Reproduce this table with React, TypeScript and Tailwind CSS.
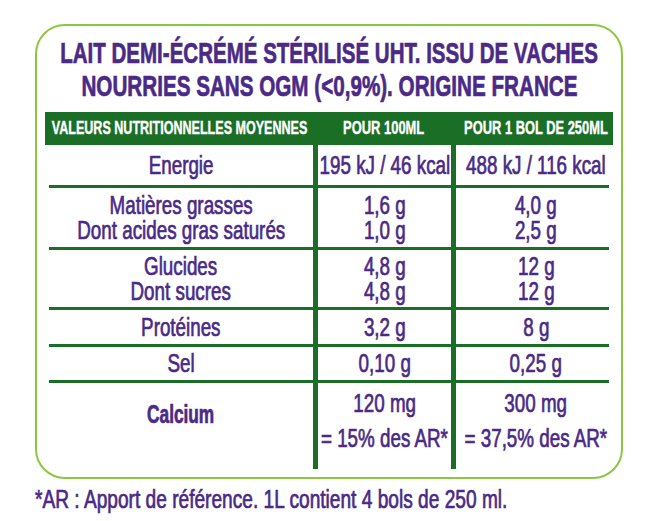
import React from "react";

const purple = "text-[#4a2a86]";
const green = "border-[#1b6e25]";
const heavy = "[-webkit-text-stroke:0.7px_currentColor]";

// Liberation Sans squeezed to match the condensed face of the label
const Sq = ({ children, k = "scale-x-[0.752]", className = "" }: { children: React.ReactNode; k?: string; className?: string }) => (
  <span className={`inline-block whitespace-nowrap ${k} ${className}`}>{children}</span>
);

const rows = [
  { label: ["Energie"], a: ["195 kJ / 46 kcal"], b: ["488 kJ / 116 kcal"], h: "h-[43px]" },
  {
    label: ["Matières grasses", "Dont acides gras saturés"],
    a: ["1,6 g", "1,0 g"],
    b: ["4,0 g", "2,5 g"],
    h: "h-[62px]",
  },
  {
    label: ["Glucides", "Dont sucres"],
    a: ["4,8 g", "4,8 g"],
    b: ["12 g", "12 g"],
    h: "h-[60px]",
  },
  { label: ["Protéines"], a: ["3,2 g"], b: ["8 g"], h: "h-[37px]" },
  { label: ["Sel"], a: ["0,10 g"], b: ["0,25 g"], h: "h-[36px]" },
];

const Cell = ({ lines, className = "" }: { lines: string[]; className?: string }) => (
  <div className={`flex flex-col items-center justify-center ${className}`}>
    {lines.map((l, i) => (
      <Sq key={i} className="leading-[25px]">
        {l}
      </Sq>
    ))}
  </div>
);

export default function App() {
  return (
    <div
      className={`w-[655px] h-[521px] bg-white overflow-hidden pt-[24px] ${heavy}`}
      style={{ fontFamily: '"Liberation Sans", Arial, sans-serif' }}
    >
      <div className="ml-[35px] w-[588px] h-[455px] border-2 border-[#8dc63f] rounded-[30px] px-[8px]">
        <div className={`${purple} font-bold text-[30px] leading-[33px] pt-[10px] h-[86px] flex flex-col items-center`}>
          <Sq k="scale-x-[0.684]">LAIT DEMI-ÉCRÉMÉ STÉRILISÉ UHT. ISSU DE VACHES</Sq>
          <Sq k="scale-x-[0.688]">NOURRIES SANS OGM (&lt;0,9%). ORIGINE FRANCE</Sq>
        </div>

        <div className="grid grid-cols-[270px_138px_160px] h-[33px] bg-[#1b6e25] text-white font-bold text-[19px] items-center [-webkit-text-stroke:0.4px_currentColor]">
          <div className="flex justify-center">
            <Sq k="scale-x-[0.66]">VALEURS NUTRITIONNELLES MOYENNES</Sq>
          </div>
          <div className="flex justify-center">
            <Sq k="scale-x-[0.68]">POUR 100ML</Sq>
          </div>
          <div className="flex justify-center pl-[5px]">
            <Sq k="scale-x-[0.678]">POUR 1 BOL DE 250ML</Sq>
          </div>
        </div>

        <div className={`mx-[4px] text-[25px] ${purple}`}>
          {rows.map((r, i) => (
            <div key={i} className={`grid grid-cols-[264px_143px_153px] border-b-[3px] ${green} ${r.h}`}>
              <Cell lines={r.label} />
              <Cell lines={r.a} className={`border-x-[5px] ${green}`} />
              <Cell lines={r.b} className="pl-[7px]" />
            </div>
          ))}
          <div className="grid grid-cols-[264px_143px_153px] h-[86px]">
            <div className="flex flex-col items-center pt-[19px] font-bold leading-[25px]">
              <Sq k="scale-x-[0.69]">Calcium</Sq>
            </div>
            <div className={`border-x-[5px] ${green} flex flex-col items-center pt-[3px] leading-[35px]`}>
              <Sq>120 mg</Sq>
              <Sq>= 15% des AR*</Sq>
            </div>
            <div className="flex flex-col items-center pt-[3px] pl-[7px] leading-[35px]">
              <Sq>300 mg</Sq>
              <Sq>= 37,5% des AR*</Sq>
            </div>
          </div>
        </div>
      </div>
      <div className={`${purple} text-[25px] leading-[30px] pl-[35px] pt-[5px]`}>
        <Sq k="scale-x-[0.765]" className="origin-left">
          *AR : Apport de référence. 1L contient 4 bols de 250 ml.
        </Sq>
      </div>
    </div>
  );
}
